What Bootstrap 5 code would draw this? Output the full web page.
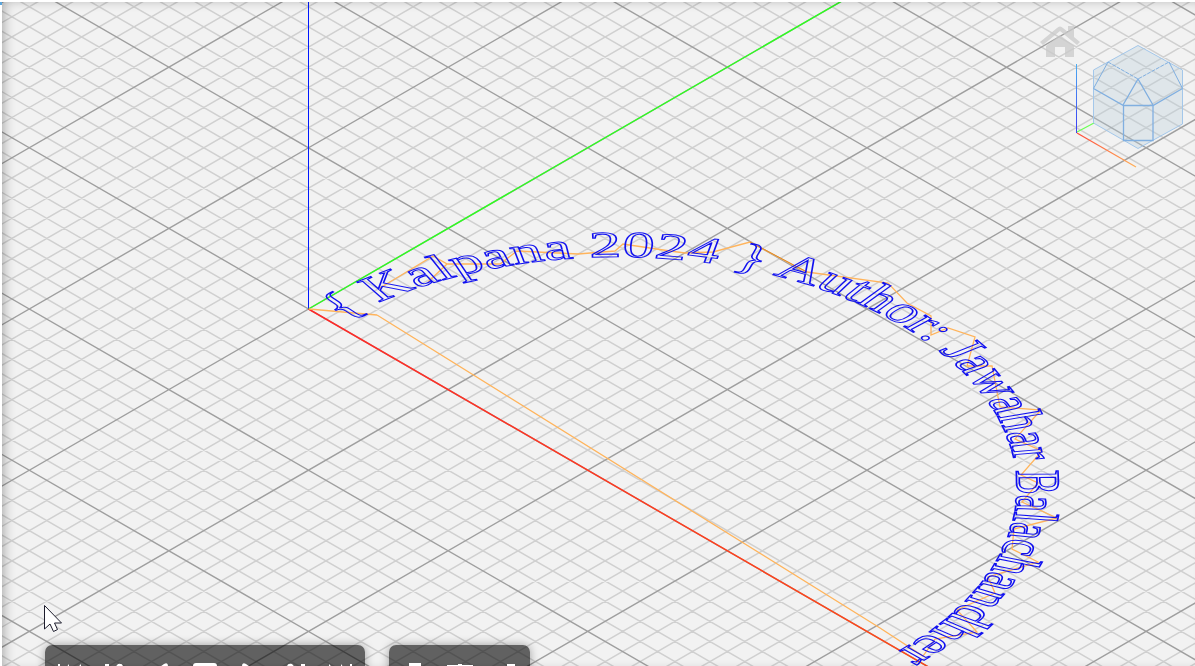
<!DOCTYPE html>
<html lang="en">
<head>
<meta charset="utf-8">
<meta name="viewport" content="width=device-width, initial-scale=1">
<title>Toolpath viewer</title>
<link href="https://cdn.jsdelivr.net/npm/bootstrap@5.3.0/dist/css/bootstrap.min.css" rel="stylesheet">
<style>
body { font-family: "Liberation Sans", Arial, sans-serif; background: #fff; }
.edge-strip { width: 2px; background: linear-gradient(#fff 2px, #5aa5dc 2px, #5aa5dc 5px, #fff 5px); }
.viewport { background: #f2f2f2; margin-top: 2px; }
.scene { left: -2px; top: -2px; overflow: visible; pointer-events: none; }
.ring-text { font-family: "Liberation Serif", "Times New Roman", serif; font-size: 52px; fill: none; stroke: #1010f0; stroke-width: 1.4px; }
.shade { box-shadow: inset 6px 2px 12px -4px rgba(0,0,0,.3); pointer-events: none; }
.navigator { top: 16px; right: 0; width: 165px; height: 160px; }
.home-btn { left: 8px; top: 4px; width: 44px; height: 38px; }
.toolbars { left: 43px; bottom: -39px; gap: 24px; }
.tool-group { height: 60px; background: rgba(0,0,0,.6); border-radius: 7px; box-shadow: 0 0 10px rgba(0,0,0,.35); padding: 0 2px; }
.tool-group button { width: 45px; color: #fff; }
.tool-group.transport { width: 320px; }
.tool-group.views { width: 141px; }
.pointer { left: 41px; top: 602px; }
</style>
</head>
<body>
<div class="d-flex vh-100 overflow-hidden">
  <div class="edge-strip flex-shrink-0"></div>
  <main class="viewport position-relative flex-grow-1 overflow-hidden">
    <svg class="scene position-absolute w-100 h-100" role="img" aria-label="Engraving toolpath">
      <path id="minor" fill="none" stroke="#d0d0d0" stroke-width="1.5"/>
      <path id="major" fill="none" stroke="#9f9f9f" stroke-width="1.4"/>
      <path d="M308.5 0V309" stroke="#0018ff" fill="none"/>
      <path d="M308.5 309L1862 -588" stroke="#2dff1e" stroke-width="1.4" fill="none"/>
      <path d="M308.5 309L1174.500 809" stroke="url(#redAxis)" stroke-width="1.5" fill="none"/>
      <defs>
        <linearGradient id="redAxis" gradientUnits="userSpaceOnUse" x1="308" y1="309" x2="925" y2="665"><stop stop-color="#ff2828"/><stop offset="1" stop-color="#ff4a16"/></linearGradient>
        <path id="arc" d="M31 0A326 326 0 0 1 683 0V60"/>
      </defs>
      <path fill="none" stroke="#ffb45c" stroke-width="1.3" d="M309 309L377 315M380 288L433 256L447 264L428 282L447 264L500 264L517 251L578 254L615 251L623 244L670 251L685 253L713 252L750 242L793 265L807 272L888 283L907 303L931 316V335L948 328L975 337L967 366H992L998 397L1000 407L1041 410L1015 439L1042 451L1021 475L1038 483L1022 502L1057 518L1014 529L1012 549L1038 562L988 577L995 593L957 610L977 632L935 639L923 656L880 628L377 315"/>
      <path fill="none" stroke="#d98a2c" d="M750 242L807 272"/>
      <!-- ring lettering lies in the isometric ground plane -->
      <g transform="matrix(.866 .5 -.866 .5 308.5 309)"><text class="ring-text"><textPath href="#arc" startOffset="9">{ Kalpana 2024 } Author: Jawahar Balachandher</textPath></text></g>
    </svg>
    <div class="shade position-absolute top-0 start-0 w-100 h-100"></div>

    <div class="navigator position-absolute">
      <button class="home-btn btn p-0 border-0 position-absolute" aria-label="Home view">
        <svg class="d-block" width="44" height="38" viewBox="0 0 44 38"><path fill="#cacaca" fill-opacity=".75" d="M2 20L19 6Q22 3 25 6L30 10V4H36V15L42 20L39 23L22 9L5 23ZM8 24L22 13L36 24V35H27V25H17V35H8Z"/></svg>
      </button>
      <svg class="d-block" width="165" height="160" role="img" aria-label="View cube">
        <defs>
          <linearGradient id="navZ" gradientUnits="userSpaceOnUse" x1="0" y1="46" x2="0" y2="115"><stop stop-color="#4dacf0"/><stop offset="1" stop-color="#3a3af5"/></linearGradient>
          <linearGradient id="navX" gradientUnits="userSpaceOnUse" x1="47" y1="115" x2="106" y2="149"><stop stop-color="#ff4a3c"/><stop offset="1" stop-color="#ffb058"/></linearGradient>
        </defs>
        <path d="M46.500 46V115" stroke="url(#navZ)"/>
        <path d="M47 114L64 105" stroke="#6cff55" stroke-width="1.3"/>
        <path d="M47 115L106 149" stroke="url(#navX)" stroke-width="1.3"/>
        <path d="M108 27.500L152.500 52V106L108 130.500L63.500 105V52Z" fill="#b8cedb" fill-opacity=".32" stroke="#a3c7ea"/>
        <g fill="none" stroke="#80afe0">
          <path d="M78 44L108 61L139 44" stroke-dasharray="4 1"/>
          <path d="M78 44L63.500 70.500M139 44L152.500 70.500"/>
          <path d="M63.500 70.500L93.500 87.500H123L152.500 70.500" stroke-width="1.3"/>
          <path d="M93.500 87.500V122.500H123V87.500M93 87L108 61L123 87" stroke-width="1.3"/>
        </g>
      </svg>
    </div>

    <div class="toolbars position-absolute d-flex">
      <div class="tool-group transport d-flex justify-content-center" role="toolbar" aria-label="Playback">
        <button class="btn p-0 border-0" aria-label="First"><svg width="30" height="24" fill="currentColor"><path d="M3 1h2v22H3zM14 1L6 12L14 23ZM26 1L16 12L26 23Z"/></svg></button>
        <button class="btn p-0 border-0" aria-label="Previous"><svg width="24" height="24" fill="currentColor"><path d="M2 1h4v22H2zM15 1q5-1 5 3v16q0 4-5 3L7 13v-3Z"/></svg></button>
        <button class="btn p-0 border-0" aria-label="Play backward"><svg width="24" height="24" fill="currentColor"><path d="M16 1Q20-1 20 3V21Q20 25 16 23L2 13V11Z"/></svg></button>
        <button class="btn p-0 border-0" aria-label="Stop"><svg width="24" height="24" fill="currentColor"><rect y="0" width="24" height="24" rx="3"/></svg></button>
        <button class="btn p-0 border-0" aria-label="Play"><svg width="24" height="24" fill="currentColor"><path d="M8 1Q4-1 4 3V21Q4 25 8 23L22 13V11Z"/></svg></button>
        <button class="btn p-0 border-0" aria-label="Next"><svg width="24" height="24" fill="currentColor"><path d="M18 1h4v22h-4zM9 1Q4 0 4 4v16q0 4 5 3l8-10v-3Z"/></svg></button>
        <button class="btn p-0 border-0" aria-label="Last"><svg width="30" height="24" fill="currentColor"><path d="M25 1h2v22h-2zM16 1L24 12L16 23ZM4 1L14 12L4 23Z"/></svg></button>
      </div>
      <div class="tool-group views d-flex justify-content-center" role="toolbar" aria-label="Display">
        <button class="btn p-0 border-0" aria-label="Tool"><svg width="24" height="24" fill="currentColor"><path d="M6 0H18V3H16V15L12 23L8 15V3H6Z"/></svg></button>
        <button class="btn p-0 border-0" aria-label="Toolpath"><svg width="26" height="24" fill="currentColor"><path d="M0 2H11V1H15V2H26V5H15V23H11V5H0Z"/></svg></button>
        <button class="btn p-0 border-0" aria-label="Statistics"><svg width="24" height="24" fill="currentColor"><path d="M14 1H22V23H14ZM4 9H11V23H4Z"/></svg></button>
      </div>
    </div>
    <svg class="pointer position-absolute" width="20" height="30" aria-hidden="true"><path d="M1.500 1.500V25L7 20L10.500 27.500L14.500 25.500L11.500 19H18.500Z" fill="#fff" stroke="#1c1c2c"/></svg>
  </main>
</div>
<script src="https://cdn.jsdelivr.net/npm/bootstrap@5.3.0/dist/js/bootstrap.bundle.min.js"></script>
<script>
// isometric ground grid: one heavy line for every eight light ones
const ox = 308.5, oy = 309, slope = 0.57735, step = 20.15, reach = 2400;
let light = "", heavy = "";
for (let k = -120; k <= 120; k++) {
  for (const s of [slope, -slope]) {
    const y = oy + k * step;
    const d = `M${ox - reach} ${y - reach * s}L${ox + reach} ${y + reach * s}`;
    if (k % 8) light += d; else heavy += d;
  }
}
document.getElementById("minor").setAttribute("d", light);
document.getElementById("major").setAttribute("d", heavy);
</script>
</body>
</html>
